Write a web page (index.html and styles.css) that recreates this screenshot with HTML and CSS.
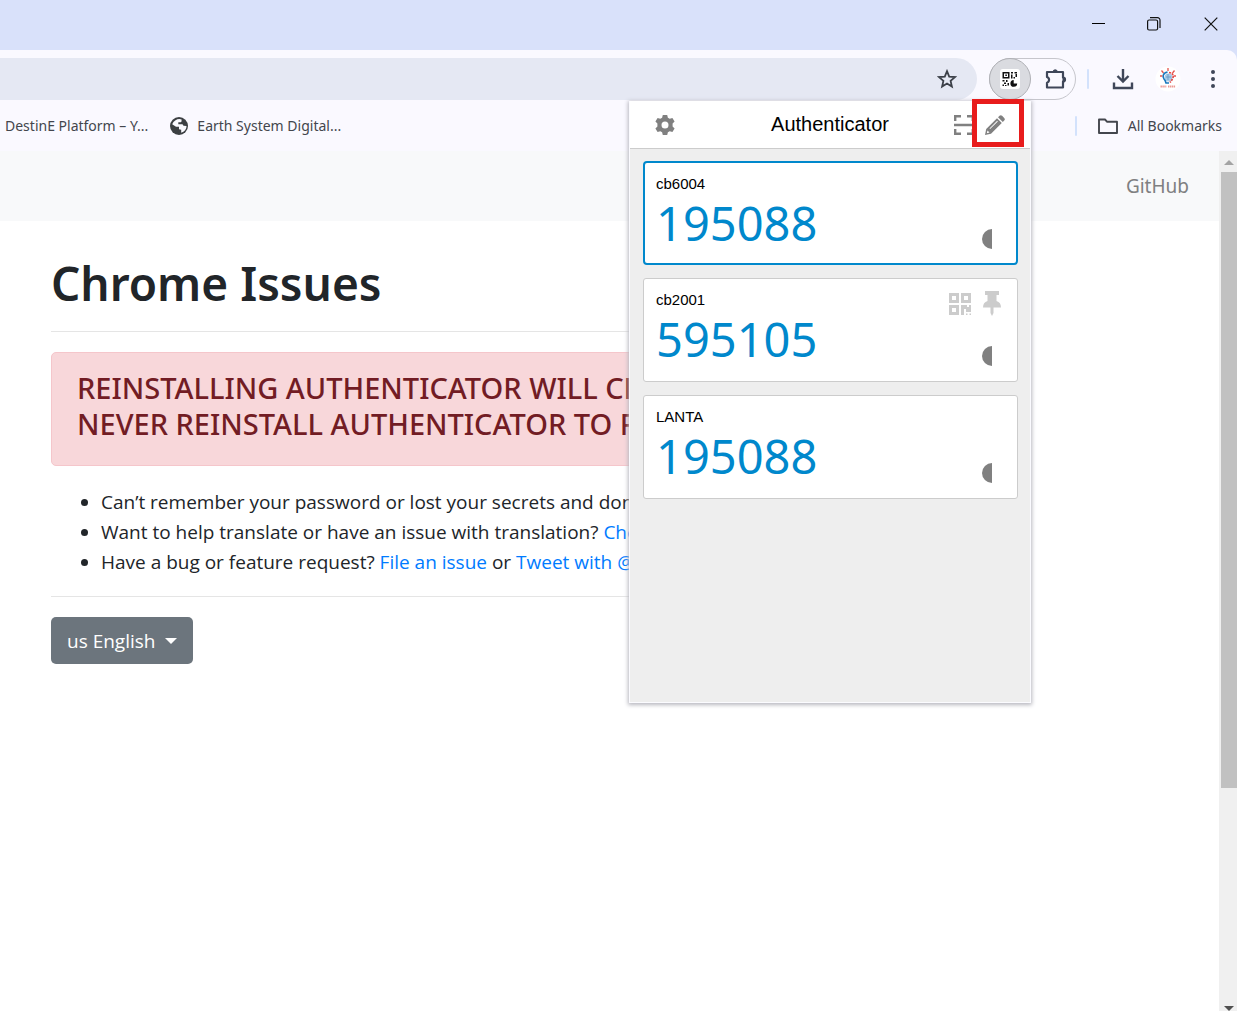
FILE: index.html
```html
<!DOCTYPE html>
<html lang="en">
<head>
<meta charset="utf-8">
<meta name="viewport" content="width=device-width, initial-scale=1">
<title>Chrome Issues</title>
<link rel="stylesheet" href="styles.css">
</head>
<body>
<header class="chrome">
  <div class="titlebar">
    <button class="win-btn" aria-label="Minimize"><svg width="14" height="14" viewBox="0 0 14 14"><path d="M0 6.500h13" stroke="#000" fill="none"/></svg></button>
    <button class="win-btn" aria-label="Restore"><svg width="14" height="14" viewBox="0 0 14 14" fill="none" stroke="#111" stroke-width="1.200"><rect x=".6" y="3" width="10" height="10" rx="1.500"/><path d="M3 .7h7.500a2.500 2.500 0 0 1 2.500 2.500V11"/></svg></button>
    <button class="win-btn win-close" aria-label="Close"><svg width="14" height="14" viewBox="0 0 14 14"><path d="M.7.7l12.600 12.600M13.300.7L.7 13.300" stroke="#111" stroke-width="1.200"/></svg></button>
  </div>
  <div class="toolbar">
    <div class="omnibox">
      <input class="address" type="text" aria-label="Address">
      <button class="icon-btn" aria-label="Bookmark this page"><svg width="20" height="20" viewBox="0 0 20 20"><path d="M10 2.200l2.200 5.400 5.800.5-4.400 3.800 1.300 5.700-4.900-3-4.900 3 1.300-5.700L2 8.100l5.800-.5z" fill="none" stroke="#3c4048" stroke-width="1.800"/></svg></button>
    </div>
    <div class="extensions">
      <button class="ext ext-active" aria-label="Authenticator"><svg width="20" height="20" viewBox="0 0 20 20"><rect width="20" height="20" rx="3" fill="#fff"/><g fill="#111"><path fill-rule="evenodd" d="M2.500 3h7v6.500h-7zM4 4.500V8h4V4.500z"/><path d="M5.300 5.500h1.600V7H5.300zM11 3h2v1.500h-2zM14.500 3H17v1.500h-2.500zM11 5.500h1.500V9.500H11zM13.500 8H15v1.500h-1.500zM15.500 5h1.500v3h-1.500zM2.500 11h2v1.500h-2zM6 11h1.500v2H6zM4 13.500h2V15H4zM7.500 14H9v2.500H7.500zM2.500 15.500H4V17H2.500zM5 16h1.500v1H5z"/><path d="M13.700 11v3.500h3.500a3.400 3.400 0 1 1-3.500-3.500z"/></g></svg></button>
      <button class="ext ext-menu" aria-label="Extensions"><svg width="24" height="24" viewBox="0 0 24 24"><path d="M3 5h16v5.500a2 2 0 0 1 0 4V20.500H3v-4.800a3 3 0 0 0 0-5.700z" fill="none" stroke="#3f4759" stroke-width="2.200" stroke-linejoin="round"/><path d="M9 5a2.200 2.200 0 0 1 4.400 0zM19 10.500a2.200 2.200 0 0 1 0 4.400z" fill="#3f4759" stroke="#3f4759"/></svg></button>
    </div>
    <span class="divider"></span>
    <button class="tool" aria-label="Downloads"><svg width="22" height="22" viewBox="0 0 22 22" fill="none" stroke="#3f4759" stroke-width="2.400"><path d="M11 1v12M5.500 8l5.500 5.500L16.500 8M2 14.500V20h18v-5.500"/></svg></button>
    <button class="tool" aria-label="Profile"><svg width="26" height="26" viewBox="0 0 26 26"><circle cx="13" cy="13" r="12.500" fill="#fff"/><path d="M13 2v3M6.500 4.500l2 2.500M19.500 4.500l-2 2.500M5 10h2.500M18.500 10H21" stroke="#e5554d" stroke-width="1.300"/><circle cx="13.500" cy="11.500" r="4" fill="#a8cbe6"/><path d="M12.500 6c-5 1-5 5-3.500 7 1 1 1.500 2 2 4h3" fill="none" stroke="#1978bd" stroke-width="1.600"/><path d="M14 6.500c4 0 5 4 3.500 6.500L15 16.500" fill="none" stroke="#e44843" stroke-width="1.700" stroke-dasharray="2 1"/><path d="M13 8v6M11 11h5" stroke="#6f9fc9"/><path d="M5.500 20.500h6M13 20.500h7.500" stroke="#eb9a94" stroke-width="1.800" stroke-dasharray="1.400 .5"/></svg></button>
    <button class="tool" aria-label="Menu"><svg width="6" height="20" viewBox="0 0 6 20" fill="#3f4759"><circle cx="3" cy="3" r="2"/><circle cx="3" cy="10" r="2"/><circle cx="3" cy="17" r="2"/></svg></button>
  </div>
  <nav class="bookmarks" aria-label="Bookmarks">
    <a class="bookmark" href="#">DestinE Platform – Y...</a>
    <a class="bookmark" href="#"><svg width="18" height="18" viewBox="0 0 18 18"><circle cx="9" cy="9" r="9" fill="#3c4043"/><path d="M9.500 2c-3 0-6 2-7.300 5.300L6 9.700h3v2.600l2.200.4v3c3.300-.7 5.300-3.500 5.300-6.700l-3-.2-1-1.500H8.300V5.200h2.300c1 0 1-1.200 1-2.700z" fill="#fafaff"/><path d="M2 8.500c0 4 3 7 6.500 7.300v-2.500L6 11.500z" fill="#3c4043"/></svg>Earth System Digital...</a>
    <span class="divider divider-push"></span>
    <a class="bookmark all" href="#"><svg width="22" height="18" viewBox="0 0 22 18"><path d="M2 2.500h6l2.200 2.300H20v11.200H2z" fill="none" stroke="#43464d" stroke-width="1.900" stroke-linejoin="round"/></svg>All Bookmarks</a>
  </nav>
</header>

<div class="viewport">
  <div class="page">
    <nav class="navbar"><a class="nav-link" href="#">GitHub</a></nav>
    <main class="content">
      <h1 class="title">Chrome Issues</h1>
      <hr class="rule">
      <div class="alert" role="alert">REINSTALLING AUTHENTICATOR WILL CL<br>NEVER REINSTALL AUTHENTICATOR TO F</div>
      <ul class="help">
        <li>Can’t remember your password or lost your secrets and don’t</li>
        <li>Want to help translate or have an issue with translation? <a href="#">Check</a></li>
        <li>Have a bug or feature request? <a href="#">File an issue</a> or <a href="#">Tweet with @</a></li>
      </ul>
      <hr class="rule">
      <button class="language" aria-haspopup="true">us English<span class="caret"></span></button>
    </main>
  </div>
  <div class="scrollbar" aria-hidden="true">
    <span class="arrow arrow-up"></span>
    <span class="thumb"></span>
    <span class="track"></span>
    <span class="arrow arrow-down"></span>
  </div>
</div>

<section class="popup" aria-label="Authenticator">
  <header class="popup-head">
    <button class="head-btn" aria-label="Settings"><svg width="20" height="20" viewBox="0 0 20 20"><path fill="#808080" fill-rule="evenodd" d="M7.800 0h4.400l.7 2.700 1.800 1 2.700-.8 2.200 3.700-2 2v2.800l2 2-2.200 3.700-2.700-.8-1.800 1-.7 2.700H7.800l-.7-2.700-1.800-1-2.700.8-2.200-3.700 2-2V8.600l-2-2 2.200-3.700 2.700.8 1.800-1zM10 6.500a3.500 3.500 0 1 0 0 7 3.500 3.500 0 0 0 0-7z"/></svg></button>
    <h2 class="popup-title">Authenticator</h2>
    <button class="head-btn scan" aria-label="Scan QR code"><svg width="20" height="20" viewBox="0 0 20 20" fill="none" stroke="#808080" stroke-width="2.400"><path d="M1.200 6V1.200H7M13 1.200h5.800V6M1.200 14v4.800H7M13 18.800h5.800V14M0 10h20"/></svg></button>
    <button class="head-btn edit" aria-label="Edit"><svg width="20" height="20" viewBox="0 0 20 20" fill="#808080"><path fill-rule="evenodd" d="M0 20l1.200-6L12 3.200 16.800 8 6 18.800zM1.800 18.200l2.700-.6-2-2.200zM4.500 13.500l.6.600 7.700-7.700-.6-.6z"/><path d="M13 2.200L14.500.8q1.300-1.200 2.600 0l2.100 2.100q1.300 1.300 0 2.600L17.800 7z"/></svg></button>
  </header>
  <div class="entries">
    <article class="entry entry-selected">
      <div class="issuer">cb6004</div>
      <div class="code">195088</div>
      <svg class="timer" width="10" height="20" viewBox="0 0 10 20"><path d="M10 0a10 10 0 0 0 0 20z" fill="#808080"/></svg>
    </article>
    <article class="entry">
      <div class="issuer">cb2001</div>
      <div class="code">595105</div>
      <div class="actions">
        <button class="action" aria-label="Show QR code"><svg width="22" height="22" viewBox="0 0 22 22" fill="#ccc"><path fill-rule="evenodd" d="M0 0h10v10H0zM3 3v4h4V3zM12 0h10v10H12zM15 3v4h4V3zM0 12h10v10H0zM3 15v4h4v-4zM12 12h6v2h2v-2h2v7h-5v-3h-2v6h-3z"/><path d="M17 20.500h1.500V22H17zM20.500 20.500H22V22h-1.500z"/></svg></button>
        <button class="action" aria-label="Pin"><svg width="18" height="25" viewBox="0 0 18 25" fill="#ccc"><path d="M2 0h14v4h-2.500v6c3 1 4.500 3 4.500 6.500h-7.500V22L9 25l-1.500-3v-5.500H0C0 13 1.500 11 4.500 10V4H2z"/></svg></button>
      </div>
      <svg class="timer" width="10" height="20" viewBox="0 0 10 20"><path d="M10 0a10 10 0 0 0 0 20z" fill="#808080"/></svg>
    </article>
    <article class="entry">
      <div class="issuer">LANTA</div>
      <div class="code">195088</div>
      <svg class="timer" width="10" height="20" viewBox="0 0 10 20"><path d="M10 0a10 10 0 0 0 0 20z" fill="#808080"/></svg>
    </article>
  </div>
  <span class="highlight"></span>
</section>
</body>
</html>
```
FILE: styles.css
```css
* { box-sizing: border-box; }

body {
  margin: 0;
  min-height: 100vh;
  display: flex;
  flex-direction: column;
  position: relative;
  background: #fff;
  color: #212529;
  font-family: "Noto Sans", "Open Sans", sans-serif;
}

button {
  margin: 0;
  padding: 0;
  border: 0;
  background: none;
  color: inherit;
  font: inherit;
  display: flex;
  align-items: center;
  justify-content: center;
}

svg { display: block; flex: none; }
a { color: #007bff; text-decoration: none; }

/* Browser window */
.chrome { background: #d9e1fa; }

.titlebar {
  height: 50px;
  display: flex;
  justify-content: flex-end;
}

.win-btn { width: 55px; height: 48px; }
.win-close { width: 56px; padding-left: 4px; }

.toolbar {
  display: flex;
  align-items: center;
  padding: 8px 2px 0 0;
  background: #faf9ff;
  border-top-right-radius: 10px;
}

.omnibox {
  flex: 1;
  height: 42px;
  margin-right: 12px;
  padding-right: 20px;
  display: flex;
  align-items: center;
  background: #e5e8f3;
  border-radius: 0 21px 21px 0;
}

.address {
  flex: 1;
  min-width: 0;
  border: 0;
  background: none;
  font: inherit;
}

.extensions {
  display: flex;
  width: 87px;
  height: 42px;
  border: 1px solid #c6c6cc;
  border-radius: 21px;
}

.ext { flex: 1; }

.ext-active {
  flex: none;
  width: 42px;
  height: 42px;
  margin: -1px;
  border: 1px solid #b0b1b6;
  border-radius: 50%;
  background: #dadbe0;
}

.ext-menu { padding-left: 6px; }

.divider {
  width: 2px;
  height: 20px;
  margin: 0 11px;
  border-radius: 1px;
  background: #d3e2fc;
}

.divider-push { margin: 0 20px 0 auto; }

.tool { width: 45px; height: 42px; }

.bookmarks {
  display: flex;
  align-items: center;
  height: 51px;
  padding: 0 15px 0 5px;
  background: #faf9ff;
}

.bookmark {
  display: flex;
  align-items: center;
  gap: 9px;
  margin-right: 22px;
  color: #43464d;
  font-size: 14px;
  white-space: nowrap;
}

.bookmark.all { margin: 0; }

/* Page */
.viewport { flex: 1; display: flex; }
.page { flex: 1; min-width: 0; }

.navbar {
  height: 70px;
  padding: 0 30px;
  display: flex;
  align-items: center;
  justify-content: flex-end;
  background: #f8f9fa;
}

.nav-link { color: #7f8081; font-size: 19px; }

.content {
  max-width: 1011px;
  padding: 32px 51px;
}

.title {
  margin: 0 0 18px;
  font-size: 46px;
  line-height: 60px;
  font-weight: 600;
}

.rule {
  margin: 0 0 20px;
  border: 0;
  border-top: 1px solid #e5e5e5;
}

.alert {
  padding: 17px 25px 23px;
  border: 1px solid #f5c6cb;
  border-radius: 5px;
  background: #f8d7da;
  color: #721c24;
  font-size: 29px;
  line-height: 36px;
  font-weight: 500;
  white-space: nowrap;
}

.help {
  margin: 21px 0 19px;
  padding-left: 50px;
  font-family: "Open Sans", "Noto Sans", sans-serif;
  font-size: 19px;
  line-height: 30px;
  white-space: nowrap;
}

.language {
  height: 47px;
  padding: 0 16px;
  gap: 10px;
  border-radius: 5px;
  background: #6c757d;
  color: #fff;
  font-family: "Open Sans", "Noto Sans", sans-serif;
  font-size: 19px;
}

.caret {
  border: 6px solid transparent;
  border-top-color: #fff;
  border-bottom: 0;
}

.scrollbar {
  width: 18px;
  padding: 9px 0 0 2px;
  display: flex;
  flex-direction: column;
  align-items: center;
  background: #f0f0f0;
}

.arrow { border: 5px solid transparent; }
.arrow-up { border-top: 0; border-bottom-color: #a3a3a3; }
.arrow-down { border-bottom: 0; border-top-color: #505050; }

.thumb {
  flex: 82;
  width: 100%;
  margin-top: 7px;
  background: #c1c1c1;
}

.track { flex: 29; }

/* Extension popup */
.popup {
  position: absolute;
  top: 101px;
  right: 206px;
  width: 402px;
  min-height: 602px;
  display: flex;
  flex-direction: column;
  border: 1px solid #fbfbff;
  border-top: 0;
  background: #eee;
  box-shadow: 0 1px 4px 1px #b8b8c0;
  color: #000;
  font-family: "Liberation Sans", Arial, sans-serif;
}

.popup-head {
  height: 48px;
  padding: 0 25px;
  display: flex;
  align-items: center;
  border-bottom: 1px solid #ccc;
  background: #fff;
}

.head-btn { width: 20px; height: 20px; }
.edit { margin-left: 11px; }

.popup-title {
  flex: 1;
  margin: 0 0 0 31px;
  font-size: 20px;
  font-weight: 400;
  text-align: center;
}

.entries {
  display: flex;
  flex-direction: column;
  gap: 13px;
  padding: 12px 12px 12px 13px;
}

.entry {
  position: relative;
  height: 104px;
  padding: 12px;
  border: 1px solid #ccc;
  border-radius: 3px;
  background: #fff;
}

.entry-selected { padding: 12px 11px; border: 2px solid #08c; border-radius: 4px; }

.issuer { font-size: 15px; line-height: 18px; }

.code {
  color: #08c;
  font-family: "Noto Sans", sans-serif;
  font-size: 47px;
  line-height: 60px;
}

.timer { position: absolute; right: 25px; bottom: 15px; }

.entry-selected .timer { right: 24px; bottom: 14px; }

.actions {
  position: absolute;
  top: 12px;
  right: 16px;
  display: flex;
  align-items: center;
  gap: 12px;
}

.highlight {
  position: absolute;
  top: -2px;
  right: 6px;
  width: 52px;
  height: 48px;
  border: 5px solid #e81c1c;
  pointer-events: none;
}
```
